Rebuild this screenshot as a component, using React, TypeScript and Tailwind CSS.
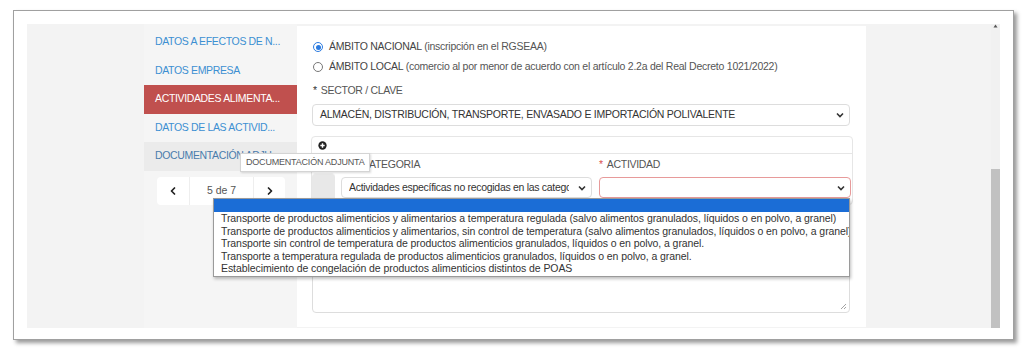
import { ChevronLeft, ChevronRight } from 'lucide-react';

const opciones = [
  'Transporte de productos alimenticios y alimentarios a temperatura regulada (salvo alimentos granulados, líquidos o en polvo, a granel)',
  'Transporte de productos alimenticios y alimentarios, sin control de temperatura (salvo alimentos granulados, líquidos o en polvo, a granel)',
  'Transporte sin control de temperatura de productos alimenticios granulados, líquidos o en polvo, a granel.',
  'Transporte a temperatura regulada de productos alimenticios granulados, líquidos o en polvo, a granel.',
  'Establecimiento de congelación de productos alimenticios distintos de POAS',
];

const Chevron = () => (
  <svg width="8" height="6" viewBox="0 0 8 6" className="shrink-0">
    <polyline points="1,1.5 4,4.5 7,1.5" fill="none" stroke="#333" strokeWidth="1.6" />
  </svg>
);

const Radio = ({ checked }: { checked?: boolean }) =>
  checked ? (
    <span className="flex h-[10px] w-[10px] items-center justify-center rounded-full border-[1.5px] border-[#2b7be0]">
      <span className="h-[5px] w-[5px] rounded-full bg-[#2b7be0]" />
    </span>
  ) : (
    <span className="h-[10px] w-[10px] rounded-full border border-[#777]" />
  );

const SideItem = ({ label, active, dim }: { label: string; active?: boolean; dim?: boolean }) => (
  <div
    className={`flex h-[28.5px] items-center pl-[11px] text-[10.5px] tracking-[-0.35px] ${
      active ? 'bg-[#c0504e] text-white' : dim ? 'bg-[#ebebeb] text-[#4a7cab]' : 'text-[#3c8fd2]'
    }`}
  >
    {label}
  </div>
);

export default function App() {
  return (
    <div className="h-[349px] w-[1028px] overflow-hidden bg-white pl-[13px] pt-[10px] [font-family:Liberation_Sans,Arial,sans-serif]">
      <div className="flex h-[330px] w-[1001px] border border-[#a0a0a0] bg-white px-[13px] pb-[11px] pt-[13px] shadow-[3px_3px_4px_rgba(0,0,0,0.4)]">
        <div className="relative flex flex-1 bg-[#f3f3f3]">
          <div className="w-[117px]" />

          {/* menu lateral */}
          <div className="flex w-[153px] flex-col bg-[#f5f5f5] pt-[4px]">
            <SideItem label="DATOS A EFECTOS DE N..." />
            <SideItem label="DATOS EMPRESA" />
            <SideItem label="ACTIVIDADES ALIMENTA..." active />
            <SideItem label="DATOS DE LAS ACTIVID..." />
            <SideItem label="DOCUMENTACIÓN ADJU..." dim />
            <div className="ml-[13px] mt-[6px] flex h-[28px] w-[128px] items-center rounded-sm bg-white text-[10.5px] text-[#555]">
              <div className="flex h-full w-[33px] items-center justify-center border-r border-[#eee]">
                <ChevronLeft size={12} strokeWidth={3.5} color="#222" />
              </div>
              <div className="flex h-full flex-1 items-center justify-center">5 de 7</div>
              <div className="flex h-full w-[32px] items-center justify-center border-l border-[#eee]">
                <ChevronRight size={12} strokeWidth={3.5} color="#222" />
              </div>
            </div>
          </div>

          {/* formulario */}
          <div className="mb-[1px] mt-[2px] flex w-[569px] flex-col bg-white pl-[15px] pt-[11px] text-[10.5px] text-[#555]">
            <div className="flex h-[20px] items-center gap-[6px] pl-[1px] tracking-[-0.25px]">
              <Radio checked />
              <span>
                <span className="text-[#444]">ÁMBITO NACIONAL</span> (inscripción en el RGSEAA)
              </span>
            </div>
            <div className="flex h-[20px] items-center gap-[6px] pl-[1px] tracking-[-0.25px]">
              <Radio />
              <span>
                <span className="text-[#444]">ÁMBITO LOCAL</span> (comercio al por menor de acuerdo con el artículo 2.2a del Real Decreto 1021/2022)
              </span>
            </div>
            <div className="mt-[7px] flex h-[14px] items-center pl-[1px] tracking-[-0.3px]">
              <span className="mr-[4px] text-[#333]">*</span>SECTOR / CLAVE
            </div>
            <div className="mt-[6px] flex h-[22px] w-[538px] items-center justify-between rounded-sm border border-[#ddd] pl-[7px] pr-[5px] text-[#333] tracking-[-0.25px]">
              <span>ALMACÉN, DISTRIBUCIÓN, TRANSPORTE, ENVASADO E IMPORTACIÓN POLIVALENTE</span>
              <Chevron />
            </div>

            <div className="-ml-[1px] mt-[10px] w-[542px] rounded-sm border border-[#e6e6e6]">
              <div className="flex h-[17px] items-center border-b border-[#e6e6e6] pl-[6px]">
                <svg width="9" height="9" viewBox="0 0 10 10">
                  <circle cx="5" cy="5" r="4.6" fill="#222" />
                  <path d="M5 2.6v4.8M2.6 5h4.8" stroke="#fff" strokeWidth="1.6" />
                </svg>
              </div>
              <div className="flex h-[50px] pt-[4px]">
                <div className="mt-[15px] h-[26px] w-[23px] rounded-t-sm border-t border-[#f2f2f2] bg-[#e8e8e8]" />
                <div className="ml-[6px] flex w-[251px] flex-col">
                  <div className="flex h-[14px] items-center pl-[13px] tracking-[-0.3px]">
                    <span className="mr-[4px] text-[#d9534f]">*</span>CATEGORIA
                  </div>
                  <div className="mt-[5px] flex h-[21px] items-center justify-between rounded-sm border border-[#ddd] pl-[7px] pr-[5px] text-[#333]">
                    <span className="w-[220px] overflow-hidden whitespace-nowrap tracking-[-0.3px]">
                      Actividades específicas no recogidas en las categorías anteriores
                    </span>
                    <Chevron />
                  </div>
                </div>
                <div className="ml-[7px] flex w-[252px] flex-col">
                  <div className="flex h-[14px] items-center tracking-[-0.3px]">
                    <span className="mr-[4px] text-[#d9534f]">*</span>ACTIVIDAD
                  </div>
                  <div className="mt-[5px] flex h-[21px] items-center justify-end rounded-sm border border-[#e79a9a] pr-[5px]">
                    <Chevron />
                  </div>
                </div>
              </div>
            </div>

            <div className="relative mt-[4px] h-[104px] w-[538px] rounded-sm border border-[#ddd]">
              <svg width="7" height="7" viewBox="0 0 7 7" className="absolute bottom-[2px] right-[2px]">
                <path d="M6 1L1 6M6 4L4 6" stroke="#999" strokeWidth="0.9" />
              </svg>
            </div>
          </div>

          <div className="flex-1" />

          {/* barra de desplazamiento */}
          <div className="relative flex w-[9px] flex-col items-center bg-[#f1f1f1]">
            <svg width="5" height="4" viewBox="0 0 5 4">
              <path d="M2.5 0.5L4.5 3.5H0.5Z" fill="#555" />
            </svg>
            <div className="mt-auto h-[159px] w-full bg-[#c1c1c1]" />
          </div>

          {/* tooltip */}
          <div className="absolute left-[213px] top-[129px] flex h-[19px] items-center border border-[#d4d4d4] bg-white px-[5px] text-[9px] text-[#555] tracking-[-0.2px] shadow-[1px_1px_2px_rgba(0,0,0,0.15)]">
            DOCUMENTACIÓN ADJUNTA
          </div>

          {/* desplegable abierto */}
          <div className="absolute left-[186px] top-[174px] w-[637px] overflow-hidden border border-[#9a9a9a] bg-white pb-[1px] text-[10.5px] text-[#333] shadow-[1px_2px_3px_rgba(0,0,0,0.25)]">
            <div className="h-[13px] bg-[#1b6dd6]" />
            {opciones.map((o) => (
              <div key={o} className="flex h-[12.6px] items-center whitespace-nowrap pl-[7px] pt-[1px] tracking-[-0.08px]">
                {o}
              </div>
            ))}
          </div>
        </div>
      </div>
    </div>
  );
}
